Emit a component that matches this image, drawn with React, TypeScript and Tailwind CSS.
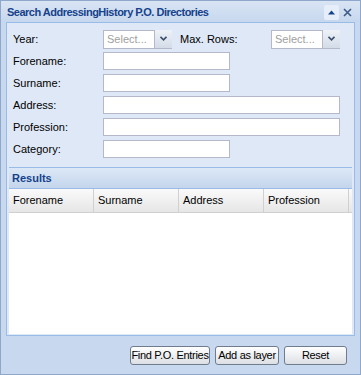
import React from "react";

const font = { fontFamily: '"Liberation Sans", Arial, sans-serif' };

function Combo() {
  return (
    <div className="flex h-[19px] w-[69px]">
      <div className="flex-1 border border-[#b5b8c8] bg-white px-[3px] text-[11px] leading-[17px] text-[#a0a0a0]">
        Select...
      </div>
      <div className="flex w-[17px] items-center justify-center border-b border-[#b5b8c8] bg-gradient-to-b from-[#eef2f8] to-[#d3dce8]">
        <svg width="7" height="5" viewBox="0 0 7 5">
          <path d="M0.5 0.8 L3.5 3.8 L6.5 0.8" fill="none" stroke="#3b4e6c" strokeWidth="1.6" />
        </svg>
      </div>
    </div>
  );
}

function Field({ w }: { w: string }) {
  return <div className={`h-[18px] border border-[#b5b8c8] bg-white ${w}`} />;
}

function Row({ label, children }: { label: string; children: React.ReactNode }) {
  return (
    <div className="flex h-[22px] items-center">
      <div className="w-[90px] text-[11px] text-black">{label}</div>
      {children}
    </div>
  );
}

function Btn({ label, w }: { label: string; w: string }) {
  return (
    <div
      className={`flex h-[19px] items-center justify-center whitespace-nowrap rounded-[3px] border border-[#6f7c8e] bg-gradient-to-b from-[#ffffff] to-[#dcdfe4] text-[11px] tracking-[-0.3px] text-black ${w}`}
    >
      {label}
    </div>
  );
}

export default function App() {
  return (
    <div style={font} className="h-[375px] w-[361px] bg-white">
      <div className="flex h-[375px] w-[361px] flex-col border border-[#8ea8cc] bg-[#c8d8ee]">
        {/* title bar */}
        <div className="flex h-[21px] items-center justify-between bg-gradient-to-b from-[#d9e5f4] to-[#c6d7ee] pl-[6px] pr-[5px] pt-[1px]">
          <span className="text-[11px] font-bold tracking-[-0.5px] text-[#15428b]">
            Search AddressingHistory P.O. Directories
          </span>
          <div className="flex gap-[1px]">
            <div className="flex h-[15px] w-[15px] items-center justify-center rounded-[2px] bg-[#e6eef9]">
              <svg width="7" height="5" viewBox="0 0 7 5">
                <path d="M0 4.5 L3.5 0.5 L7 4.5 Z" fill="#15428b" />
              </svg>
            </div>
            <div className="flex h-[15px] w-[15px] items-center justify-center">
              <svg width="9" height="9" viewBox="0 0 9 9">
                <path d="M1 1 L8 8 M8 1 L1 8" stroke="#3d5a86" strokeWidth="1.6" />
              </svg>
            </div>
          </div>
        </div>

        {/* body */}
        <div className="mx-[5px] flex flex-col border border-[#99bbe8] bg-[#dfe8f6]">
          <div className="flex flex-col px-[6px] pb-[7px] pt-[5px]">
            <div className="flex h-[22px] items-center">
              <div className="w-[90px] text-[11px] text-black">Year:</div>
              <Combo />
              <div className="ml-[8px] w-[91px] text-[11px] text-black">Max. Rows:</div>
              <Combo />
            </div>
            <Row label="Forename:">
              <Field w="w-[127px]" />
            </Row>
            <Row label="Surname:">
              <Field w="w-[127px]" />
            </Row>
            <Row label="Address:">
              <Field w="w-[237px]" />
            </Row>
            <Row label="Profession:">
              <Field w="w-[237px]" />
            </Row>
            <Row label="Category:">
              <Field w="w-[127px]" />
            </Row>
          </div>

          {/* results panel */}
          <div className="mx-[2px] mb-[1px] flex flex-col border-t border-[#99bbe8]">
            <div className="flex h-[21px] items-center border-b border-[#99bbe8] bg-gradient-to-b from-[#dce8f6] to-[#c4d5ec] pl-[3px] text-[11px] font-bold text-[#15428b]">
              Results
            </div>
            <div className="flex h-[145px] flex-col bg-white">
              <div className="flex h-[24px] border-b border-[#d0d0d0] bg-gradient-to-b from-[#fafafa] to-[#e6e6e6] pr-[2px] text-[11px] text-black">
                {["Forename", "Surname", "Address", "Profession"].map((c) => (
                  <div
                    key={c}
                    className="flex w-[85px] items-center border-r border-[#d0d0d0] pl-[4px]"
                  >
                    {c}
                  </div>
                ))}
              </div>
            </div>
          </div>
        </div>

        {/* footer */}
        <div className="flex flex-1 items-start justify-end gap-[5px] pr-[13px] pt-[10px]">
          <Btn label="Find P.O. Entries" w="w-[80px]" />
          <Btn label="Add as layer" w="w-[64px]" />
          <Btn label="Reset" w="w-[63px]" />
        </div>
      </div>
    </div>
  );
}
